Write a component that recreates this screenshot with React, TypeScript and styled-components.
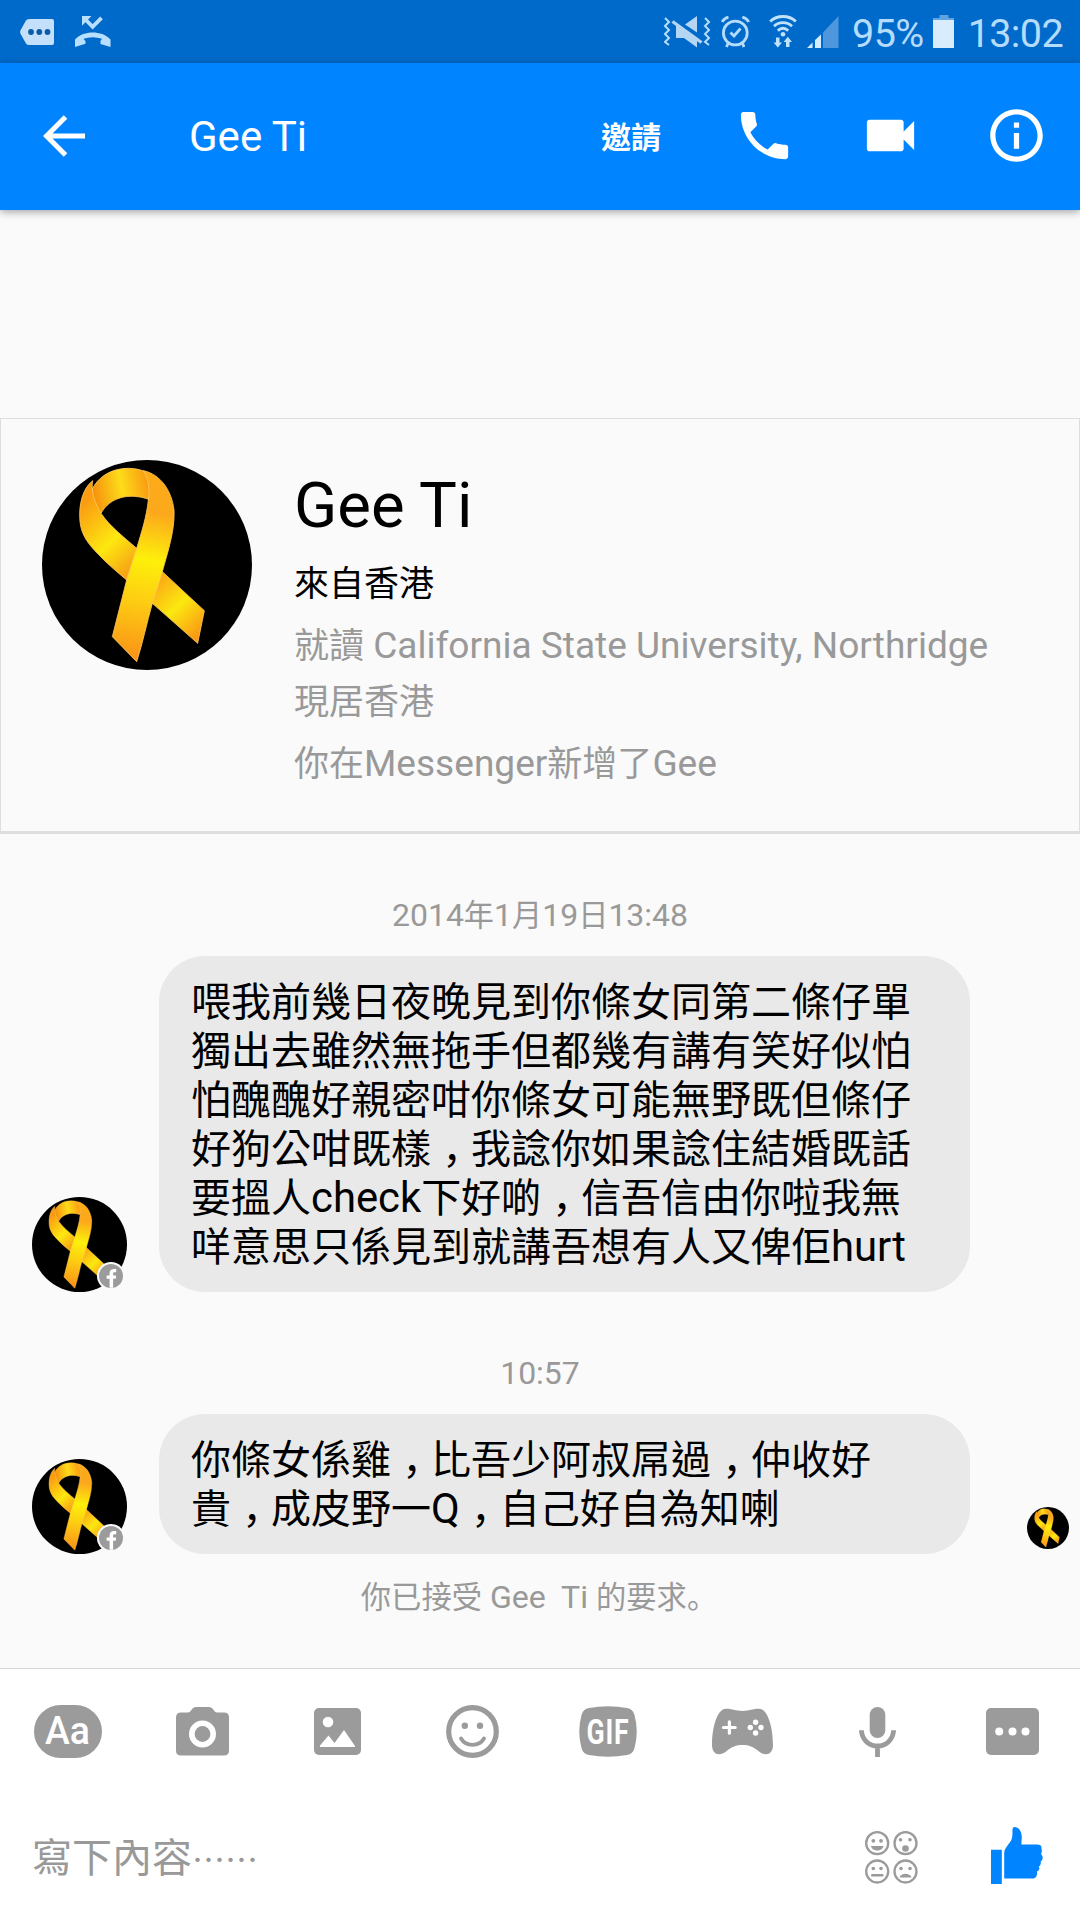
import React from "react";
import styled, { createGlobalStyle } from "styled-components";

const GlobalStyle = createGlobalStyle`
  *, *::before, *::after { box-sizing: border-box; }
  body { margin: 0; background: #fafafa; }
  svg { display: block; flex: none; }
`;

const Screen = styled.div`
  display: flex;
  flex-direction: column;
  width: 1080px;
  height: 1920px;
  overflow: hidden;
  background: #fafafa;
  color: #000;
  font-family: Roboto, "Noto Sans CJK TC", sans-serif;
`;

/* Latin runs are set slightly larger than the Chinese text around them. */
const Latin = styled.span`
  font-size: 1.059em;
  line-height: 1;
`;

/* The comma sits low, near the middle of its full-width cell. */
const Comma = styled.span`
  display: inline-block;
  width: 1em;
  padding-left: 0.28em;
  font-family: "Noto Sans CJK JP", sans-serif;
  font-feature-settings: "halt";
  line-height: 1;
  white-space: nowrap;
`;

const FullStop = styled.span`
  font-family: "Noto Sans CJK JP", sans-serif;
  line-height: 1;
`;

const StatusBar = styled.div`
  display: flex;
  align-items: center;
  flex: none;
  height: 63px;
  padding: 0 17px 0 20px;
  background: #006acb;
  color: #b5dcfb;
`;

const StatusGroup = styled.div<{ $push?: boolean }>`
  display: flex;
  align-items: center;
  margin-left: ${(p) => (p.$push ? "auto" : "0")};
`;

const StatusIcon = styled.div<{ $gap: number }>`
  margin-right: ${(p) => p.$gap}px;
`;

const StatusText = styled.span<{ $gap?: number }>`
  font-size: 39.5px;
  line-height: 60px;
  letter-spacing: -0.6px;
  margin: 4px ${(p) => p.$gap ?? 0}px 0 0;
`;

const Header = styled.header`
  display: flex;
  align-items: center;
  flex: none;
  height: 147px;
  padding: 0 32px 2px 43px;
  background: #0084ff;
  color: #fff;
  box-shadow: 0 2px 8px rgba(0, 0, 0, 0.35);
  z-index: 1;
`;

const Title = styled.h1`
  margin: 2px auto 0 104px;
  font-size: 42px;
  font-weight: 400;
  line-height: 60px;
`;

const Invite = styled.button`
  border: 0;
  padding: 0;
  margin: 0 72px 2px 0;
  background: none;
  color: #fff;
  font: 700 30px/44px "Noto Sans CJK TC", sans-serif;
`;

const HeaderActions = styled.div`
  display: flex;
  gap: 63px;
`;

const Thread = styled.main`
  flex: 1;
  display: flex;
  flex-direction: column;
  padding-top: 208px;
`;

const ProfileCard = styled.section`
  display: flex;
  align-items: flex-start;
  flex: none;
  height: 416px;
  padding: 41px 0 0 41px;
  border: 1px solid #dedede;
  border-bottom: 3px solid #dedede;
`;

const ProfileText = styled.div`
  display: flex;
  flex-direction: column;
  margin-left: 42px;
  padding-top: 8px;
`;

const ProfileName = styled.h2`
  margin: 0 0 13px;
  font-size: 63.5px;
  font-weight: 400;
  line-height: 76px;
`;

const ProfileLine = styled.p<{ $dark?: boolean; $after?: number }>`
  margin: 0 0 ${(p) => p.$after ?? 0}px;
  font-size: 35px;
  line-height: 56px;
  white-space: nowrap;
  color: ${(p) => (p.$dark ? "#000" : "#999")};
`;

const Stamp = styled.div`
  margin: 62px 0 20px;
  font-size: 30.2px;
  line-height: 40px;
  text-align: center;
  color: #999;
`;

const MessageRow = styled.div`
  display: flex;
  align-items: flex-end;
  padding: 0 11px 0 32px;
`;

const AvatarWrap = styled.div`
  position: relative;
  margin-right: 32px;
`;

const Badge = styled.div`
  position: absolute;
  right: 2px;
  bottom: 2px;
`;

const Bubble = styled.div`
  width: 811px;
  padding: 22px 32px 20px;
  border-radius: 46px;
  background: #e9e9e9;
  font-size: 40px;
  line-height: 49px;
  white-space: nowrap;

  ${Latin} {
    font-size: 1.045em;
  }
`;

const Seen = styled.div`
  margin: 0 0 5px auto;
`;

const Notice = styled.div`
  margin-top: 23px;
  padding-right: 2px;
  font-size: 30.3px;
  line-height: 42px;
  text-align: center;
  white-space: pre;
  color: #999;
`;

const Composer = styled.footer`
  flex: none;
  height: 252px;
  border-top: 1px solid #d6d6d6;
  background: #fff;
`;

const Tools = styled.div`
  display: grid;
  grid-template-columns: repeat(8, 135px);
  align-items: center;
  justify-items: center;
  height: 125px;
`;

const InputRow = styled.div`
  display: flex;
  align-items: center;
  height: 126px;
  padding: 0 37px 0 32px;
`;

const Placeholder = styled.span`
  margin: 4px auto 0 0;
  font-size: 40px;
  line-height: 60px;
  color: #999;
`;

const Dots = styled.span`
  font-family: "Noto Sans CJK TC", sans-serif;
  font-size: 33px;
  line-height: 1;
`;

const EmojiButton = styled.div`
  margin-right: 73px;
`;

const LikeButton = styled.div`
  margin-bottom: 4px;
`;

const GREY = "#9b9b9b";

function MixedText({ children }: { children: string }) {
  const parts = children.split(/([\x20-\x7e]+|，|。)/).filter(Boolean);
  return (
    <>
      {parts.map((part, i) => {
        if (part === "，") return <Comma key={i} lang="ja">{part}</Comma>;
        if (part === "。") return <FullStop key={i} lang="ja">{part}</FullStop>;
        if (/^[\x20-\x7e]+$/.test(part)) return <Latin key={i}>{part}</Latin>;
        return <React.Fragment key={i}>{part}</React.Fragment>;
      })}
    </>
  );
}

function RibbonAvatar({ size, id }: { size: number; id: string }) {
  const u = (n: string) => `url(#${id}${n})`;
  return (
    <svg width={size} height={size} viewBox="36 30 630 630">
      <defs>
        <linearGradient id={`${id}a`} gradientUnits="userSpaceOnUse" x1="185" y1="130" x2="365" y2="100">
          <stop offset="0" stopColor="#f58d0c" />
          <stop offset="0.5" stopColor="#fddc1a" />
          <stop offset="1" stopColor="#f9930f" />
        </linearGradient>
        <linearGradient id={`${id}b`} gradientUnits="userSpaceOnUse" x1="160" y1="160" x2="520" y2="540">
          <stop offset="0" stopColor="#fb9b12" />
          <stop offset="0.27" stopColor="#fde810" />
          <stop offset="0.46" stopColor="#f7a414" />
          <stop offset="0.62" stopColor="#fbac16" />
          <stop offset="0.8" stopColor="#fbe810" />
          <stop offset="1" stopColor="#fa9a14" />
        </linearGradient>
        <linearGradient id={`${id}c`} gradientUnits="userSpaceOnUse" x1="400" y1="80" x2="300" y2="620">
          <stop offset="0" stopColor="#fcab18" />
          <stop offset="0.2" stopColor="#fca81c" />
          <stop offset="0.46" stopColor="#fdf00a" />
          <stop offset="0.7" stopColor="#fdcc12" />
          <stop offset="1" stopColor="#fb9418" />
        </linearGradient>
      </defs>
      <circle cx="351" cy="345" r="315" fill="#000" />
      <g stroke="#ffc95a" strokeWidth="2.5" strokeLinejoin="round">
        <path fill={u("a")} d="M180 135C195 85 240 55 295 55C330 55 360 68 380 88L356 148C300 128 240 140 213 190C195 175 183 155 180 135Z" />
        <path fill={u("b")} d="M188 92C158 115 145 165 150 215C154 255 175 282 205 313C230 340 260 365 290 390L367 460L503 580L523 482L397 365L320 295C280 260 240 230 213 190C195 160 182 125 188 92Z" />
        <path fill={u("c")} d="M340 62C390 72 425 120 432 180C435 240 415 300 397 365L367 460C350 520 338 580 320 635L247 560L290 390L320 295C335 245 350 200 355 150C360 115 355 85 340 62Z" />
      </g>
    </svg>
  );
}

function FacebookBadge() {
  return (
    <svg width="28" height="28" viewBox="0 0 28 28">
      <circle cx="14" cy="14" r="14" fill="#fafafa" />
      <circle cx="14" cy="14" r="12" fill="#9b9b9b" />
      <path fill="#fff" d="M12.6 25.8V16.8H9.6V13.4H12.6V11.4C12.6 8.4 14.2 6.9 17 6.9H19.2V10.2H17.6C16.5 10.2 16.1 10.7 16.1 11.7V13.4H19.2L18.7 16.8H16.1V25.8Z" />
    </svg>
  );
}

const StatusMore = () => (
  <svg width="34" height="28" viewBox="0 0 34 28">
    <path fill="#c3dffa" d="M9 1H32Q34 1 34 3V25Q34 27 32 27H9Q7 27 6 25.4L.6 16Q-.4 14 .6 12L6 2.6Q7 1 9 1Z" />
    <g fill="#0a5ba8"><circle cx="11" cy="14" r="2.9" /><circle cx="19.3" cy="14" r="2.9" /><circle cx="27.5" cy="14" r="2.9" /></g>
  </svg>
);

const MissedCall = () => (
  <svg width="36" height="32" viewBox="0 0 36 32">
    <path fill="none" stroke="#b9dfff" strokeWidth="3.8" d="M9 2L17.6 10.8L26.5 1.8" />
    <path fill="#b9dfff" d="M7 0H16.5L7 9.8Z" />
    <path fill="#b9dfff" d="M0 31V23.5C5 18.6 11 16.6 17.6 16.6C24.5 16.6 30.5 18.6 35.5 23.5V31L25.5 28V25L27 22.8C21 20.8 14.5 20.8 8.5 22.8L10.5 25.2V27.8Z" />
  </svg>
);

const VibrateMute = () => (
  <svg width="47" height="32" viewBox="0 0 47 32">
    <g fill="none" stroke="#b5dcfb" strokeWidth="2">
      <path d="M1 2L5 6L1 10L5 14L1 18L5 22L1 26L5 29" />
      <path d="M41 2L45 6L41 10L45 14L41 18L45 22L41 26L45 29" />
    </g>
    <path fill="#b5d6f3" d="M12 9.5H15L33 22V31.5L20 22H12ZM21 8.5L33 0V16.5Z" />
    <path stroke="#b5d6f3" strokeWidth="3.2" d="M8.5 5.5L37.5 26.5" />
  </svg>
);

const Alarm = () => (
  <svg width="29" height="32" viewBox="0 0 29 32" fill="none" stroke="#b5dcfb" strokeWidth="2.8">
    <circle cx="14.3" cy="17" r="11.9" />
    <path d="M9.5 16.5L13 20L19.5 12.5M1.2 6C2.3 3.5 4.5 1.8 7.5 1.2M27.6 6C26.5 3.5 24.3 1.8 21.3 1.2M7 27.5L5.5 31M21.6 27.5L23 31" />
  </svg>
);

const Wifi = () => (
  <svg width="28" height="33" viewBox="0 0 28 33" fill="none" stroke="#c0e2fb" strokeWidth="2.8">
    <path d="M1.2 6.5C8 -.2 20 -.2 26.8 6.5M5 11.2C10 6.5 18 6.5 23 11.2M8.8 15.6C12 12.7 16 12.7 19.2 15.6" />
    <circle cx="14" cy="19.3" r="2.3" fill="#c0e2fb" stroke="none" />
    <path fill="#c0e2fb" stroke="none" d="M7 22.5H10.5V27.5H13L8.8 32.5L4.6 27.5H7ZM17 32V27H14.6L18.8 21.8L23 27H20.5V32Z" />
  </svg>
);

const Signal = () => (
  <svg width="32" height="32" viewBox="0 0 32 32">
    <path fill="#4f97dc" d="M16 16.5L31.5 0V32H16Z" />
    <path fill="#d3ecff" d="M0 32L5.5 26.5V32ZM8 24L14 18.5V32H8Z" />
  </svg>
);

const Battery = () => (
  <svg width="21" height="33" viewBox="0 0 21 33">
    <path fill="#5fa3e0" d="M6.5 0H15.5V3H21V6H0V3H6.5Z" />
    <rect y="5" width="21" height="28" fill="#d8ecfb" />
  </svg>
);

const BackArrow = () => (
  <svg width="42" height="42" viewBox="0 0 42 42" fill="none" stroke="#fff" strokeWidth="5">
    <path d="M22.5 2L3.5 21L22.5 40M3 21H42" />
  </svg>
);

const MaterialIcon = ({ d }: { d: string }) => (
  <svg width="63" height="63" viewBox="0 0 24 24" fill="#fff"><path d={d} /></svg>
);

const PHONE = "M6.62 10.79c1.44 2.83 3.76 5.14 6.59 6.59l2.2-2.2c.27-.27.67-.36 1.02-.24 1.12.37 2.33.57 3.57.57.55 0 1 .45 1 1V20c0 .55-.45 1-1 1-9.39 0-17-7.61-17-17 0-.55.45-1 1-1h3.5c.55 0 1 .45 1 1 0 1.25.2 2.45.57 3.57.11.35.03.74-.25 1.02l-2.2 2.2z";
const VIDEO = "M17 10.5V7c0-.55-.45-1-1-1H4c-.55 0-1 .45-1 1v10c0 .55.45 1 1 1h12c.55 0 1-.45 1-1v-3.5l4 4v-11l-4 4z";
const INFO = "M11 17h2v-6h-2v6zm1-15C6.48 2 2 6.48 2 12s4.48 10 10 10 10-4.48 10-10S17.52 2 12 2zm0 18c-4.41 0-8-3.59-8-8s3.59-8 8-8 8 3.59 8 8-3.59 8-8 8zM11 9h2V7h-2v2z";

const TextTool = () => (
  <svg width="68" height="53" viewBox="0 0 68 53">
    <rect width="68" height="53" rx="26.5" fill={GREY} />
    <text x="11" y="38.8" fontSize="39" fontWeight="500" fill="#fff" textLength="45" lengthAdjust="spacingAndGlyphs" fontFamily="Roboto, sans-serif">Aa</text>
  </svg>
);

const CameraTool = () => (
  <svg width="53" height="49" viewBox="0 0 53 49">
    <path fill={GREY} d="M5 5.5H12Q14 5.5 15 3.5Q17 0 20 0H33Q36 0 38 3.5Q39 5.5 41 5.5H48Q53 5.5 53 10.5V43.5Q53 48.5 48 48.5H5Q0 48.5 0 43.5V10.5Q0 5.5 5 5.5Z" />
    <circle cx="26.5" cy="27" r="10.7" fill="none" stroke="#fff" strokeWidth="5.6" />
  </svg>
);

const PhotoTool = () => (
  <svg width="47" height="47" viewBox="0 0 47 47">
    <rect width="47" height="47" rx="5" fill={GREY} />
    <circle cx="14" cy="14" r="5.3" fill="#fff" />
    <path fill="#fff" d="M6 39V37.5L14.5 27.5L20.5 35L30 22L41 38V39Z" />
  </svg>
);

const SmileTool = () => (
  <svg width="53" height="53" viewBox="0 0 53 53" fill={GREY}>
    <circle cx="26.5" cy="26.5" r="23.8" fill="none" stroke={GREY} strokeWidth="5.2" />
    <circle cx="18.8" cy="20.8" r="3.2" /><circle cx="34" cy="20.8" r="3.2" />
    <path fill="none" stroke={GREY} strokeWidth="3.8" strokeLinecap="round" d="M15 33.5C20 42 33 42 38 33.5" />
  </svg>
);

const GifTool = () => (
  <svg width="58" height="51" viewBox="0 0 58 51">
    <path fill={GREY} d="M10 2Q29 -1.5 48 2Q54 3 55.5 9Q60 25.5 55.5 42Q54 48 48 49Q29 52.5 10 49Q4 48 2.5 42Q-2 25.5 2.5 9Q4 3 10 2Z" />
    <g transform="translate(29 38.2) scale(0.76 1)">
      <text textAnchor="middle" fontSize="35" fontWeight="700" letterSpacing="1" fill="#fff" fontFamily="Roboto, sans-serif">GIF</text>
    </g>
  </svg>
);

const GameTool = () => (
  <svg width="61" height="47" viewBox="0 0 61 47">
    <path fill={GREY} d="M14 .8C20 .8 24 3 30.5 3C37 3 41 .8 47 .8C56 .8 61 20 61 37C61 46 54 49 47 43.5C41 38.5 37 37 30.5 37C24 37 20 38.5 14 43.5C7 49 0 46 0 37C0 20 5 .8 14 .8Z" />
    <path stroke="#fff" strokeWidth="3.2" strokeLinecap="round" d="M11.5 19.5H23.2M17.4 13.8V25.2" />
    <g fill="#fff"><circle cx="38.3" cy="19.5" r="2.7" /><circle cx="49" cy="19.5" r="2.7" /><circle cx="43.6" cy="14.2" r="2.7" /><circle cx="43.6" cy="25" r="2.7" /></g>
  </svg>
);

const MicTool = () => (
  <svg width="37" height="50" viewBox="0 0 37 50">
    <rect x="10.7" width="15.6" height="31" rx="7.8" fill={GREY} />
    <path fill="none" stroke={GREY} strokeWidth="4.8" d="M2.5 23.3V24.5C3.5 33 10 39 18.5 39C27 39 33.5 33 34.5 24.5V23.3M18.5 38V50" />
  </svg>
);

const MoreTool = () => (
  <svg width="53" height="47" viewBox="0 0 53 47">
    <rect width="53" height="47" rx="5" fill={GREY} />
    <g fill="#fff"><circle cx="13.2" cy="23.5" r="4" /><circle cx="26.5" cy="23.5" r="4" /><circle cx="39.5" cy="23.5" r="4" /></g>
  </svg>
);

const EmojiGrid = () => (
  <svg width="53" height="53" viewBox="0 0 53 53" fill={GREY}>
    <g fill="none" stroke={GREY} strokeWidth="2.3">
      <circle cx="12.2" cy="12.2" r="11" /><circle cx="40.5" cy="12.2" r="11" />
      <circle cx="12.2" cy="40.5" r="11" /><circle cx="40.5" cy="40.5" r="11" />
    </g>
    <circle cx="8.3" cy="9.8" r="1.9" /><circle cx="16" cy="9.8" r="1.9" />
    <path d="M6 15H18.5C17.5 21 7 21 6 15Z" />
    <circle cx="35.5" cy="8.8" r="1.8" /><circle cx="45" cy="8.8" r="1.8" /><circle cx="40.5" cy="17.5" r="3.3" />
    <circle cx="8.3" cy="37.5" r="1.8" /><circle cx="16" cy="37.5" r="1.8" />
    <rect x="6" y="43" width="12.5" height="2.4" rx="1.2" />
    <circle cx="36" cy="37.5" r="1.8" /><circle cx="45" cy="37.5" r="1.8" />
    <path d="M34.5 46.5C36 41.5 45 41.5 46.5 46.5Z" />
  </svg>
);

const ThumbUp = () => (
  <svg width="52" height="57" viewBox="0 0 52 57" fill="#0084ff">
    <path d="M0 22.7H10.8V57H0ZM13.2 51.5V25.5C13.4 23 15 20.5 18 16.5C21.5 12.5 21.5 10 21.5 2Q21.5 0 24 0C28.5 .5 30.8 5 30.8 10.5L30.3 17.5H46C49.5 17.5 51 19 50.5 22C51 23.5 51 25.5 50 27C52.3 29.5 52.3 32.5 49.8 34.5C50 37 49.3 39 47.8 39.5C49 42 48.5 43 46 44.5C46.5 47.5 45.5 51.5 41.5 51.5Z" />
  </svg>
);

const TOOLS = [TextTool, CameraTool, PhotoTool, SmileTool, GifTool, GameTool, MicTool, MoreTool];

const FIRST = [
  "喂我前幾日夜晚見到你條女同第二條仔單",
  "獨出去雖然無拖手但都幾有講有笑好似怕",
  "怕醜醜好親密咁你條女可能無野既但條仔",
  "好狗公咁既樣，我諗你如果諗住結婚既話",
  "要搵人check下好啲，信吾信由你啦我無",
  "咩意思只係見到就講吾想有人又俾佢hurt",
];
const SECOND = ["你條女係雞，比吾少阿叔屌過，仲收好", "貴，成皮野一Q，自己好自為知喇"];

function Message({ lines, id, seen }: { lines: string[]; id: string; seen?: boolean }) {
  return (
    <MessageRow>
      <AvatarWrap>
        <RibbonAvatar size={95} id={id} />
        <Badge><FacebookBadge /></Badge>
      </AvatarWrap>
      <Bubble>
        {lines.map((line) => <div key={line}><MixedText>{line}</MixedText></div>)}
      </Bubble>
      {seen && <Seen><RibbonAvatar size={42} id={`${id}seen`} /></Seen>}
    </MessageRow>
  );
}

export default function App() {
  return (
    <Screen lang="zh-Hant">
      <GlobalStyle />
      <StatusBar>
        <StatusGroup>
          <StatusIcon $gap={21}><StatusMore /></StatusIcon>
          <StatusIcon $gap={0}><MissedCall /></StatusIcon>
        </StatusGroup>
        <StatusGroup $push>
          <StatusIcon $gap={10}><VibrateMute /></StatusIcon>
          <StatusIcon $gap={19}><Alarm /></StatusIcon>
          <StatusIcon $gap={10}><Wifi /></StatusIcon>
          <StatusIcon $gap={13}><Signal /></StatusIcon>
          <StatusText $gap={9}>95%</StatusText>
          <StatusIcon $gap={14}><Battery /></StatusIcon>
          <StatusText>13:02</StatusText>
        </StatusGroup>
      </StatusBar>
      <Header>
        <BackArrow />
        <Title>Gee Ti</Title>
        <Invite>邀請</Invite>
        <HeaderActions>
          <MaterialIcon d={PHONE} />
          <MaterialIcon d={VIDEO} />
          <MaterialIcon d={INFO} />
        </HeaderActions>
      </Header>
      <Thread>
        <ProfileCard>
          <RibbonAvatar size={210} id="profile" />
          <ProfileText>
            <ProfileName>Gee Ti</ProfileName>
            <ProfileLine $dark $after={6}>來自香港</ProfileLine>
            <ProfileLine><MixedText>就讀 California State University, Northridge</MixedText></ProfileLine>
            <ProfileLine $after={6}>現居香港</ProfileLine>
            <ProfileLine><MixedText>你在Messenger新增了Gee</MixedText></ProfileLine>
          </ProfileText>
        </ProfileCard>
        <Stamp><MixedText>2014年1月19日13:48</MixedText></Stamp>
        <Message lines={FIRST} id="first" />
        <Stamp><MixedText>10:57</MixedText></Stamp>
        <Message lines={SECOND} id="second" seen />
        <Notice><MixedText>{"你已接受 Gee  Ti 的要求。"}</MixedText></Notice>
      </Thread>
      <Composer>
        <Tools>{TOOLS.map((Tool, i) => <Tool key={i} />)}</Tools>
        <InputRow>
          <Placeholder>寫下內容<Dots>……</Dots></Placeholder>
          <EmojiButton><EmojiGrid /></EmojiButton>
          <LikeButton><ThumbUp /></LikeButton>
        </InputRow>
      </Composer>
    </Screen>
  );
}
